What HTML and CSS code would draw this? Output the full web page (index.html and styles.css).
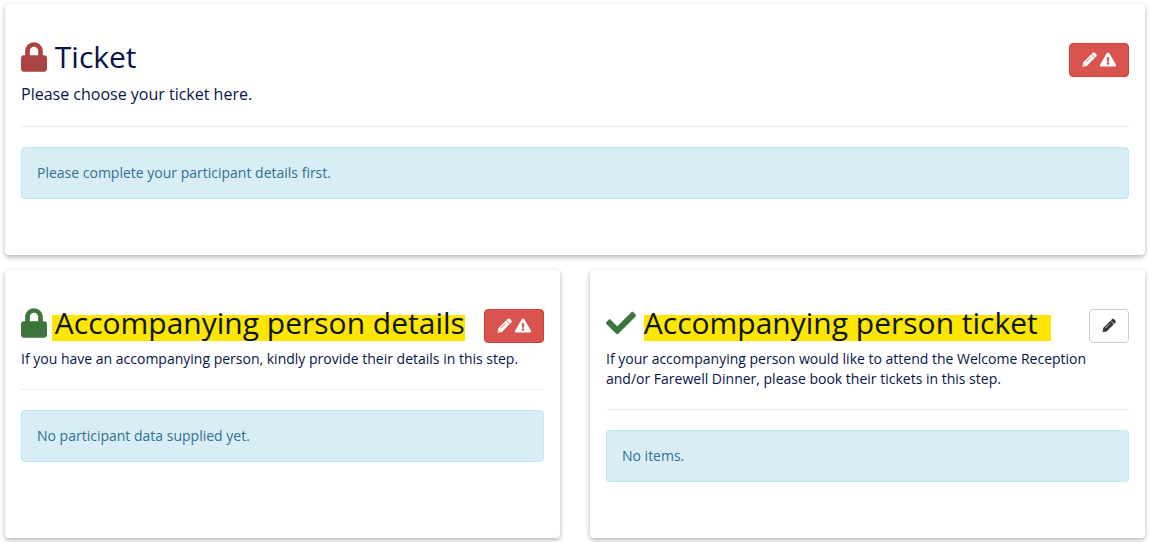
FILE: index.html
```
<!DOCTYPE html>
<html lang="en">
<head>
    <meta charset="UTF-8">
    <meta name="viewport" content="width=device-width, initial-scale=1.0">
    <title>Registration</title>
    <link rel="stylesheet" href="styles.css">
</head>
<body>
    <svg class="sprite" aria-hidden="true">
        <symbol id="lock" viewBox="0 0 448 512">
            <path d="M400 224h-24v-72C376 68.200 307.800 0 224 0S72 68.200 72 152v72H48c-26.500 0-48 21.500-48 48v192c0 26.500 21.500 48 48 48h352c26.500 0 48-21.500 48-48V272c0-26.500-21.500-48-48-48zm-104 0H152v-72c0-39.700 32.300-72 72-72s72 32.300 72 72v72z"/>
        </symbol>
        <symbol id="check" viewBox="0 0 512 512">
            <path d="M173.898 439.404l-166.400-166.400c-9.997-9.997-9.997-26.206 0-36.204l36.203-36.204c9.997-9.998 26.207-9.998 36.204 0L192 312.690 432.095 72.596c9.997-9.997 26.207-9.997 36.204 0l36.203 36.204c9.997 9.997 9.997 26.206 0 36.204l-294.400 294.401c-9.998 9.997-26.207 9.997-36.204-.001z"/>
        </symbol>
        <symbol id="pencil" viewBox="0 0 16 16">
            <path fill-rule="evenodd" d="M11.100 1.100c.9-.9 2.200-.9 3 0l.9.900c.9.900.9 2.100 0 3l-1.100 1.100-3.900-3.900zM9.600 2.600l3.900 3.900-8.300 8.300L.5 15.700l.9-4.900zM9.200 5.300l-5.400 5.400.4.400 5.400-5.400zM1.900 13.300l-.3 1.300 1.300-.3z"/>
        </symbol>
        <symbol id="warning" viewBox="0 0 576 512">
            <path d="M569.517 440.013C587.975 472.007 564.806 512 527.940 512H48.054c-36.937 0-59.999-40.055-41.577-71.987L246.423 23.985c18.467-32.009 64.720-31.951 83.154 0l239.940 416.028zM288 354c-25.405 0-46 20.595-46 46s20.595 46 46 46 46-20.595 46-46-20.595-46-46-46zm-43.673-165.346l7.418 136c.347 6.364 5.609 11.346 11.982 11.346h48.546c6.373 0 11.635-4.982 11.982-11.346l7.418-136c.375-6.874-5.098-12.654-11.982-12.654h-63.383c-6.884 0-12.356 5.780-11.981 12.654z"/>
        </symbol>
    </svg>

    <main class="steps">
        <section class="card wide">
            <div class="card-header">
                <h2>
                    <svg class="icon-lock locked"><use href="#lock"/></svg>
                    Ticket
                </h2>
                <button type="button" class="btn btn-danger" aria-label="Edit ticket, incomplete">
                    <svg class="icon-pencil"><use href="#pencil"/></svg>
                    <svg class="icon-warning"><use href="#warning"/></svg>
                </button>
            </div>
            <p class="lead">Please choose your ticket here.</p>
            <hr>
            <div class="alert">Please complete your participant details first.</div>
        </section>

        <section class="card">
            <div class="card-header">
                <h2>
                    <svg class="icon-lock done"><use href="#lock"/></svg>
                    <mark class="mark-before">Accompanying person details</mark>
                </h2>
                <button type="button" class="btn btn-danger" aria-label="Edit accompanying person details, incomplete">
                    <svg class="icon-pencil"><use href="#pencil"/></svg>
                    <svg class="icon-warning"><use href="#warning"/></svg>
                </button>
            </div>
            <p>If you have an accompanying person, kindly provide their details in this step.</p>
            <hr>
            <div class="alert">No participant data supplied yet.</div>
        </section>

        <section class="card">
            <div class="card-header">
                <h2>
                    <svg class="icon-check done"><use href="#check"/></svg>
                    <mark class="mark-after">Accompanying person ticket</mark>
                </h2>
                <button type="button" class="btn btn-default" aria-label="Edit accompanying person ticket">
                    <svg class="icon-pencil"><use href="#pencil"/></svg>
                </button>
            </div>
            <p>If your accompanying person would like to attend the Welcome Reception and/or Farewell Dinner, please book their tickets in this step.</p>
            <hr>
            <div class="alert">No items.</div>
        </section>
    </main>
</body>
</html>
```

FILE: styles.css
```
* {
    box-sizing: border-box;
}
body {
    font-family: "Open Sans", sans-serif;
    font-size: 14px;
    line-height: 20px;
    margin: 0;
    padding: 4px 4px 4px 5px;
    color: #07134a;
    background-color: #fff;
}
.sprite {
    display: none;
}
.steps {
    display: grid;
    grid-template-columns: 1fr 1fr;
    gap: 15px 30px;
}
.card {
    padding: 37px 16px 36px;
    background-color: #fff;
    border-radius: 4px;
    box-shadow: 0 2px 5px rgba(0, 0, 0, 0.3);
}
.wide {
    grid-column: 1 / -1;
}
.card-header {
    display: flex;
    justify-content: space-between;
    align-items: flex-start;
    height: 33px;
    margin-bottom: 9px;
}
h2 {
    margin: 0;
    font-size: 30px;
    font-weight: 400;
    line-height: 31px;
    white-space: nowrap;
}
h2 svg {
    height: 30px;
    fill: currentColor;
    vertical-align: -4px;
}
.icon-lock {
    width: 26px;
}
.icon-check {
    width: 30px;
}
.locked {
    color: #a94442;
}
.done {
    color: #3c763d;
}
mark {
    color: #0a160c;
    background: linear-gradient(transparent 13px, #ffe600 13px, #ffe600 39px, transparent 39px);
}
.mark-before {
    margin-left: -3px;
    padding-left: 3px;
}
.mark-after {
    padding-right: 13px;
}
p {
    margin: 0;
}
.lead {
    font-size: 16px;
    line-height: 23px;
}
hr {
    margin: 20px 0;
    border: 0;
    border-top: 1px solid #eee;
}
.btn {
    display: flex;
    justify-content: center;
    align-items: center;
    gap: 3px;
    height: 34px;
    margin-top: 2px;
    padding: 5px 12px 7px;
    border: 1px solid;
    border-radius: 4px;
    cursor: pointer;
}
.btn svg {
    height: 15px;
    fill: currentColor;
}
.btn-danger {
    width: 60px;
    color: #fff;
    background-color: #d9534f;
    border-color: #d43f3a;
}
.btn-default {
    width: 40px;
    color: #333;
    background-color: #fff;
    border-color: #ccc;
}
.icon-pencil {
    width: 15px;
}
.icon-warning {
    width: 16px;
}
.alert {
    margin-bottom: 20px;
    padding: 15px;
    color: #31708f;
    background-color: #d9edf7;
    border: 1px solid #bce8f1;
    border-radius: 4px;
}
```
